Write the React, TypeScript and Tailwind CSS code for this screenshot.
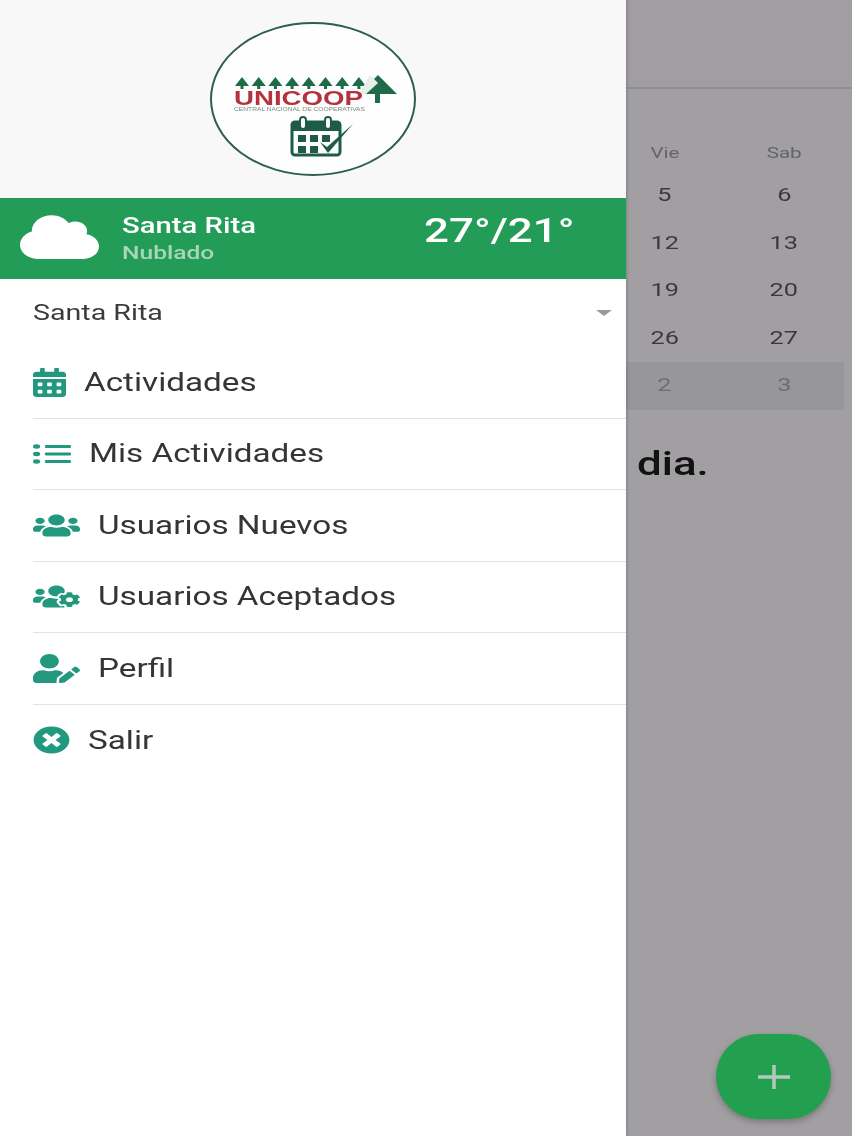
import { FaCalendarAlt, FaCloud, FaListUl, FaTimesCircle, FaUserEdit, FaUsers, FaUsersCog } from 'react-icons/fa';
import type { IconType } from 'react-icons';

// the screenshot is stretched sideways, so text gets the same stretch
const wide = 'inline-block whitespace-nowrap origin-left scale-x-[1.33]';
const wideCenter = 'inline-block whitespace-nowrap scale-x-[1.33]';

const menu: { label: string; icon: IconType; w: number; h: number }[] = [
  { label: 'Actividades', icon: FaCalendarAlt, w: 33, h: 29 },
  { label: 'Mis Actividades', icon: FaListUl, w: 38, h: 24 },
  { label: 'Usuarios Nuevos', icon: FaUsers, w: 47, h: 25 },
  { label: 'Usuarios Aceptados', icon: FaUsersCog, w: 47, h: 25 },
  { label: 'Perfil', icon: FaUserEdit, w: 47, h: 29 },
  { label: 'Salir', icon: FaTimesCircle, w: 37, h: 28 },
];

const weeks = [
  ['5', '6'],
  ['12', '13'],
  ['19', '20'],
  ['26', '27'],
];

function Logo() {
  const trees = [32, 48.7, 65.4, 82.1, 98.8, 115.5, 132.2, 148.9];
  return (
    <svg width="206" height="154" viewBox="0 0 206 154" className="blur-[0.4px]">
      <ellipse cx="103" cy="77" rx="102" ry="76" fill="#fefefe" stroke="#2f5f4c" strokeWidth="2" />
      {trees.map((x) => (
        <g key={x} fill="#1f6b47">
          <polygon points={`${x},55 ${x + 7},64 ${x - 7},64`} />
          <rect x={x - 1.5} y="63" width="3" height="4" />
        </g>
      ))}
      <polygon points="168,53 187,72 149,72" fill="#1f6b47" />
      <polygon points="160,53 168,61 156,72 149,72" fill="#e8efe9" />
      <rect x="165" y="70" width="5" height="11" fill="#1f6b47" />
      <text x="24" y="83" fontSize="21" fontWeight="700" fill="#b3323e" fontFamily="Liberation Sans, sans-serif" textLength="129" lengthAdjust="spacingAndGlyphs">
        UNICOOP
      </text>
      <text x="24" y="89" fontSize="5" fill="#7b8a80" fontFamily="Liberation Sans, sans-serif" textLength="131" lengthAdjust="spacingAndGlyphs">
        CENTRAL NACIONAL DE COOPERATIVAS
      </text>
      <rect x="82" y="100" width="48" height="33" rx="3" fill="#fefefe" stroke="#1f5c45" strokeWidth="3" />
      <rect x="81" y="100" width="50" height="9" rx="2" fill="#1f5c45" />
      <rect x="90" y="95" width="6" height="12" rx="3" fill="#fefefe" stroke="#1f5c45" strokeWidth="2" />
      <rect x="115" y="95" width="6" height="12" rx="3" fill="#fefefe" stroke="#1f5c45" strokeWidth="2" />
      <g fill="#1f5c45">
        {[88, 100, 112].map((x) =>
          [113, 124].map((y) => (x === 112 && y === 124 ? null : <rect key={`${x}-${y}`} x={x} y={y} width="8" height="7" />)),
        )}
      </g>
      <polygon points="110,120 117,125 143,102 118,131" fill="#1f5c45" />
    </svg>
  );
}

export default function App() {
  return (
    <div className="relative h-screen w-full overflow-hidden bg-[#a19fa2]" style={{ fontFamily: 'Roboto, sans-serif' }}>
      {/* page behind the drawer */}
      <div className="h-[89px] border-b-2 border-[#8f8e90] bg-[#a09ea0]" />
      <div className="grid grid-cols-7 px-[8.5px] pt-[47px]">
        <div className="col-start-6 flex h-[36px] items-center justify-center text-[15.5px] text-[#656466]">
          <span className={wideCenter}>Vie</span>
        </div>
        <div className="col-start-7 flex h-[36px] items-center justify-center text-[15.5px] text-[#656466]">
          <span className={wideCenter}>Sab</span>
        </div>
        {weeks.map((week) =>
          week.map((day, i) => (
            <div
              key={day}
              className={`${i === 0 ? 'col-start-6' : 'col-start-7'} flex h-[47.4px] items-center justify-center text-[19px] text-[#3a393b]`}
            >
              <span className={wideCenter}>{day}</span>
            </div>
          )),
        )}
        <div className="col-span-7 grid h-[48px] grid-cols-7 bg-[#979698] text-[19px] text-[#6f6e70]">
          <div className="col-start-6 flex items-center justify-center">
            <span className={wideCenter}>2</span>
          </div>
          <div className="col-start-7 flex items-center justify-center">
            <span className={wideCenter}>3</span>
          </div>
        </div>
      </div>
      <div className="mt-[27px] pl-[637px] text-[33px] leading-[54px] font-medium text-[#121212]">
        <span className={wide}>dia.</span>
      </div>

      <button className="absolute right-[21px] bottom-[17px] flex h-[85px] w-[115px] items-center justify-center rounded-full bg-[#22a04f] shadow-[0_3px_6px_rgba(0,0,0,0.25)]">
        <svg width="32" height="24" viewBox="0 0 32 24">
          <path d="M0 12h32M16 0v24" stroke="#b5c9ba" strokeWidth="3.5" fill="none" />
        </svg>
      </button>

      {/* drawer */}
      <aside className="absolute top-0 bottom-0 left-0 flex w-[626px] flex-col bg-white shadow-[1px_0_3px_rgba(0,0,0,0.2)]">
        <div className="flex h-[198px] shrink-0 items-center justify-center bg-[#f8f8f9] pr-[-1px]">
          <Logo />
        </div>

        <div className="flex h-[81px] shrink-0 bg-[#239c57] text-white">
          <FaCloud className="mt-[14px] ml-[20px] shrink-0" style={{ width: 79, height: 50 }} preserveAspectRatio="none" />
          <div className="ml-[23px] w-[302px] pt-[13px]">
            <div className="h-[30px] text-[22px] leading-[30px] font-medium">
              <span className={wide}>Santa Rita</span>
            </div>
            <div className="h-[25px] text-[18.5px] leading-[25px] font-medium text-[#a9d6b8]">
              <span className={wide}>Nublado</span>
            </div>
          </div>
          <div className="pt-[11px] text-[33px] leading-[44px] font-medium">
            <span className={wide}>27°/21°</span>
          </div>
        </div>

        <div className="flex h-[68px] shrink-0 items-center justify-between pr-[14px] pl-[33px] text-[21.5px] text-[#3b3a3c]">
          <span className={wide}>Santa Rita</span>
          <span className="h-0 w-0 border-x-[8px] border-t-[6px] border-x-transparent border-t-[#9a9a9a]" />
        </div>

        <nav className="ml-[33px]">
          {menu.map((item, i) => {
            const Icon = item.icon;
            return (
              <div
                key={item.label}
                className={`flex h-[71.5px] items-center gap-[18px] text-[25px] text-[#353436] ${i < menu.length - 1 ? 'border-b border-[#e3e3e4]' : ''}`}
              >
                <Icon className="shrink-0 text-[#22997f]" style={{ width: item.w, height: item.h }} preserveAspectRatio="none" />
                <span className={wide}>{item.label}</span>
              </div>
            );
          })}
        </nav>
      </aside>
    </div>
  );
}
